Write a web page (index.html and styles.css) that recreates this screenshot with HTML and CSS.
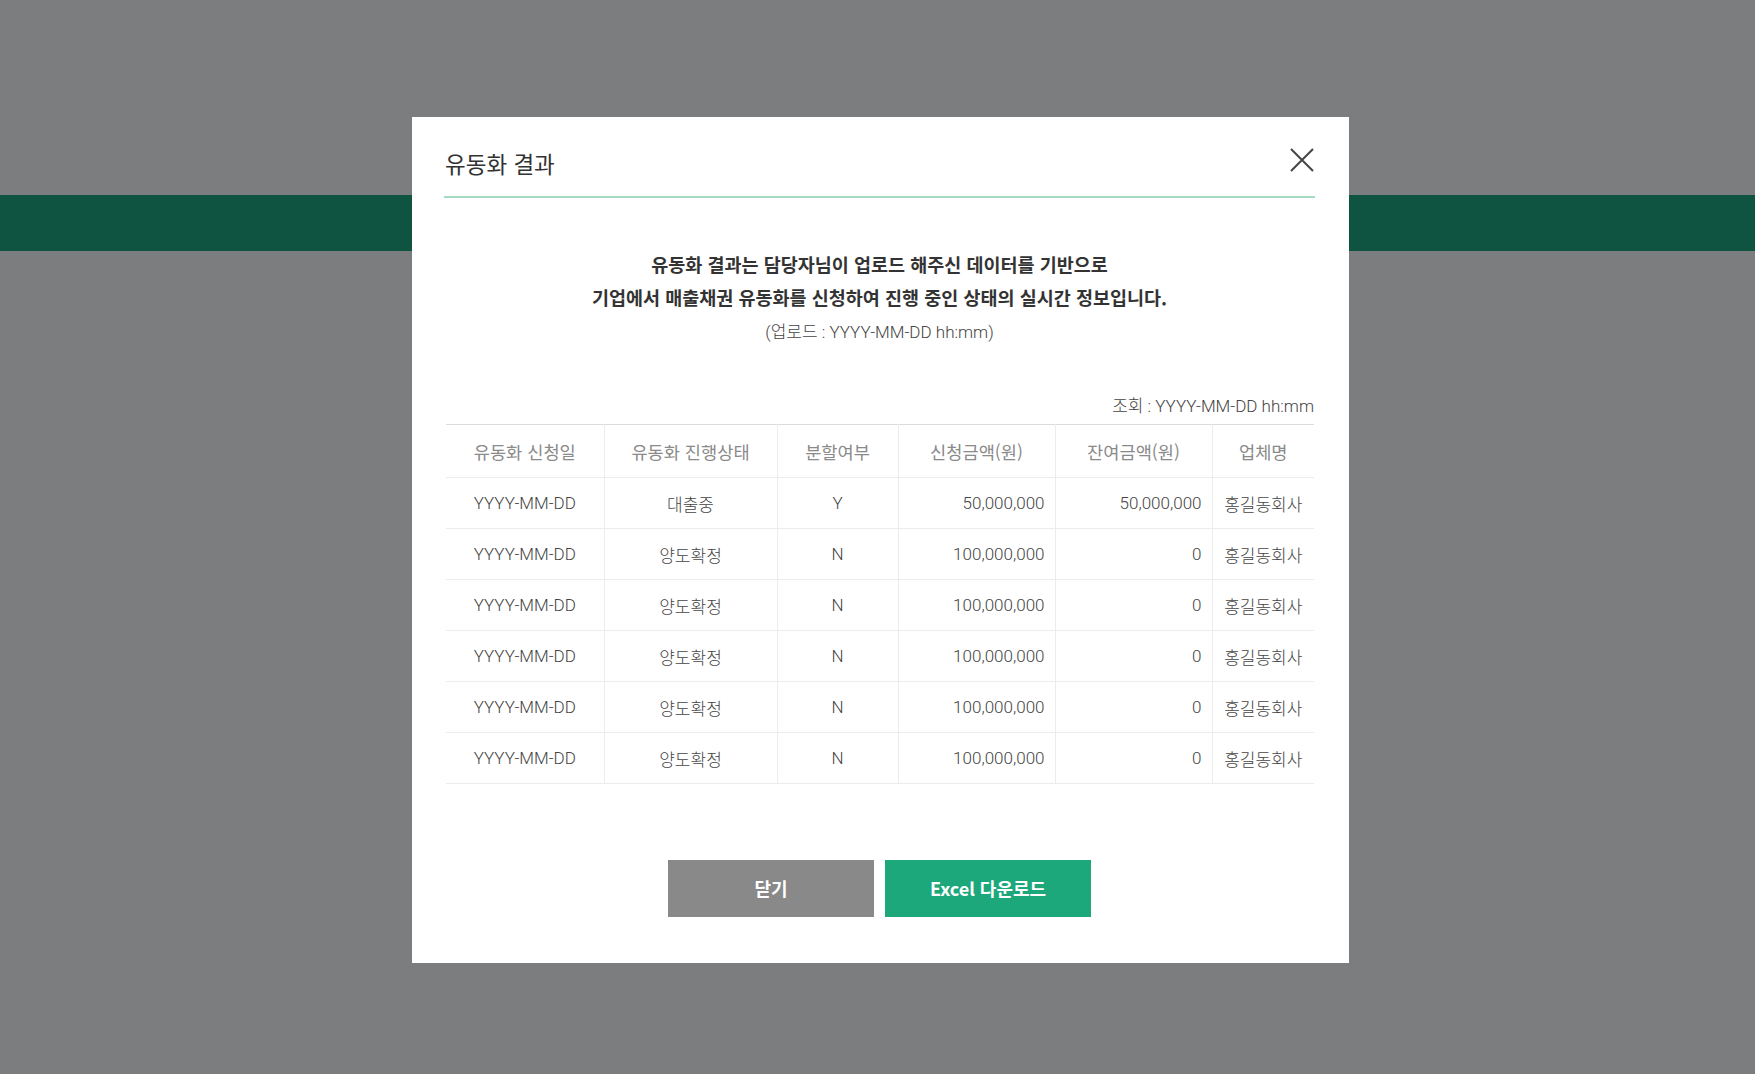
FILE: index.html
```html
<!DOCTYPE html>
<html lang="ko">
<head>
<meta charset="utf-8">
<title>유동화 결과</title>
<link rel="stylesheet" href="styles.css">
</head>
<body>
<div class="page">
  <div class="band"></div>
</div>
<div class="overlay">
  <div class="modal">
    <div class="modal-head">
      <h2 class="modal-title">유동화 결과</h2>
      <button class="close" type="button" aria-label="닫기">
        <svg width="24" height="24" viewBox="0 0 24 24"><path d="M1 1L23 23M23 1L1 23" stroke="#444" stroke-width="2" fill="none"/></svg>
      </button>
    </div>
    <div class="desc">
      <p class="desc-strong">유동화 결과는 담당자님이 업로드 해주신 데이터를 기반으로</p>
      <p class="desc-strong">기업에서 매출채권 유동화를 신청하여 진행 중인 상태의 실시간 정보입니다.</p>
      <p class="desc-sub">(업로드 : YYYY-MM-DD hh:mm)</p>
    </div>
    <div class="query">조회 : YYYY-MM-DD hh:mm</div>
    <table class="grid">
      <colgroup>
        <col class="c1"><col class="c2"><col class="c3"><col class="c4"><col class="c5"><col class="c6">
      </colgroup>
      <thead>
        <tr><th>유동화 신청일</th><th>유동화 진행상태</th><th>분할여부</th><th>신청금액(원)</th><th>잔여금액(원)</th><th>업체명</th></tr>
      </thead>
      <tbody>
        <tr><td>YYYY-MM-DD</td><td>대출중</td><td>Y</td><td class="num">50,000,000</td><td class="num">50,000,000</td><td>홍길동회사</td></tr>
        <tr><td>YYYY-MM-DD</td><td>양도확정</td><td>N</td><td class="num">100,000,000</td><td class="num">0</td><td>홍길동회사</td></tr>
        <tr><td>YYYY-MM-DD</td><td>양도확정</td><td>N</td><td class="num">100,000,000</td><td class="num">0</td><td>홍길동회사</td></tr>
        <tr><td>YYYY-MM-DD</td><td>양도확정</td><td>N</td><td class="num">100,000,000</td><td class="num">0</td><td>홍길동회사</td></tr>
        <tr><td>YYYY-MM-DD</td><td>양도확정</td><td>N</td><td class="num">100,000,000</td><td class="num">0</td><td>홍길동회사</td></tr>
        <tr><td>YYYY-MM-DD</td><td>양도확정</td><td>N</td><td class="num">100,000,000</td><td class="num">0</td><td>홍길동회사</td></tr>
      </tbody>
    </table>
    <div class="actions">
      <button class="btn btn-gray" type="button">닫기</button>
      <button class="btn btn-green" type="button">Excel 다운로드</button>
    </div>
  </div>
</div>
</body>
</html>
```

FILE: styles.css
```css
* { box-sizing: border-box; }
html, body { margin: 0; padding: 0; }
body {
  width: 1755px;
  height: 1074px;
  background: #7c7d7f;
  font-family: Roboto, "Noto Sans CJK KR", sans-serif;
  overflow: hidden;
}
.page { padding-top: 195px; }
.band { height: 56px; background: #0f5341; }

.overlay {
  position: fixed;
  inset: 0;
  display: flex;
  justify-content: center;
  align-items: flex-start;
  padding-top: 117px;
  padding-left: 6px;
}
.modal {
  width: 937px;
  height: 846px;
  background: #fff;
  padding: 0 34px 0 32px;
  display: flex;
  flex-direction: column;
}
.modal-head {
  display: flex;
  justify-content: space-between;
  align-items: flex-start;
  padding-top: 30px;
  padding-bottom: 17px;
  border-bottom: 2px solid #a3dcc3;
}
.modal-title {
  margin: 0 0 0 1px;
  font-family: "Noto Sans CJK KR", sans-serif;
  font-size: 22.5px;
  font-weight: 400;
  line-height: 32px;
  color: #333;
}
.close {
  margin: 1px 1px 0 0;
  padding: 0;
  border: 0;
  background: none;
  width: 24px;
  height: 24px;
  display: block;
}
.close svg { display: block; }

.desc {
  padding-top: 50px;
  text-align: center;
}
.desc p { margin: 0; }
.desc-strong {
  font-family: "Noto Sans CJK KR", sans-serif;
  font-size: 18.5px;
  font-weight: 700;
  line-height: 33px;
  color: #333;
}
.desc-sub {
  font-size: 17px;
  font-weight: 300;
  line-height: 36px;
  color: #444;
}
.query {
  margin-top: 44px;
  text-align: right;
  font-size: 17px;
  font-weight: 300;
  line-height: 24px;
  color: #444;
  padding-right: 1px;
}
.grid {
  margin: 6px 1px 0 2px;
  width: 868px;
  border-collapse: collapse;
  table-layout: fixed;
  border-top: 1px solid #dcdcdc;
  border-bottom: 1px solid #dcdcdc;
}
.c1 { width: 158px; }
.c2 { width: 173px; }
.c3 { width: 121px; }
.c4 { width: 157px; }
.c5 { width: 157px; }
.c6 { width: 102px; }
.grid th, .grid td {
  border-bottom: 1px solid #ececec;
  border-left: 1px solid #ececec;
  text-align: center;
  font-size: 17px;
  padding: 0;
  white-space: nowrap;
}
.grid th:first-child, .grid td:first-child { border-left: 0; }
.grid th {
  height: 53px;
  font-family: "Noto Sans CJK KR", sans-serif;
  font-size: 17.6px;
  font-weight: 400;
  color: #8a8a8a;
}
.grid td {
  height: 51px;
  font-weight: 300;
  color: #444;
}
.grid td.num {
  text-align: right;
  padding-right: 10px;
}

.actions {
  margin-top: 76px;
  display: flex;
  justify-content: center;
  gap: 11px;
}
.btn {
  width: 206px;
  height: 57px;
  border: 0;
  padding-bottom: 2px;
  font-family: "Noto Sans CJK KR", sans-serif;
  font-size: 18px;
  font-weight: 700;
  color: #fff;
}
.btn-gray { background: #898989; }
.btn-green { background: #1ca87a; }
```
